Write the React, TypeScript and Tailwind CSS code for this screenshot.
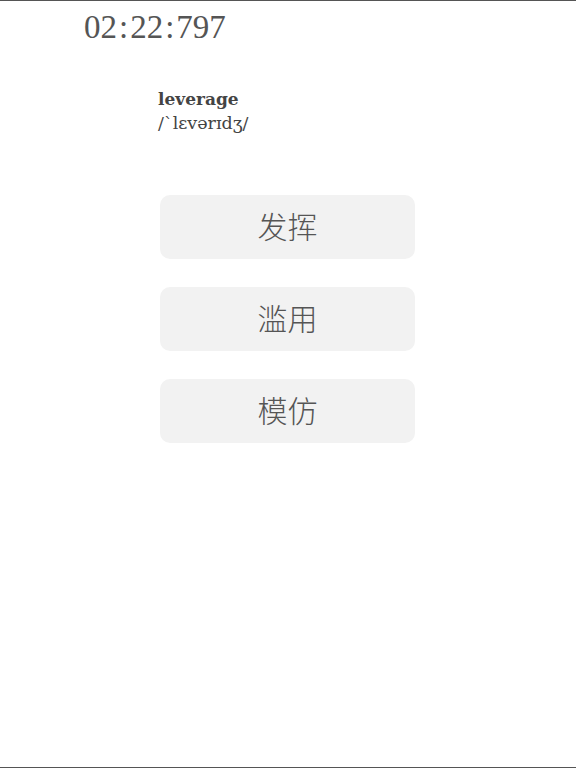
import React from 'react';

const options = ['发挥', '滥用', '模仿'];

const App: React.FC = () => {
  return (
    <div className="h-[768px] w-[576px] border-y border-[#555] bg-white text-[#555] flex flex-col">
      {/* Timer */}
      <div className="pl-[84px] pt-[6px] text-[33px] leading-[40px] font-['Liberation_Serif',serif] text-[#555] flex">
        <span>02</span>
        <span className="mx-[2px]">:</span>
        <span>22</span>
        <span className="mx-[2px]">:</span>
        <span>797</span>
      </div>

      {/* Word */}
      <div className="pl-[158px] pt-[40px] font-['DejaVu_Serif',serif]">
        <div className="text-[17px] leading-[24px] font-semibold text-[#444]">leverage</div>
        <div className="text-[17.5px] leading-[24px] text-[#444]">/ˋlɛvərɪdʒ/</div>
      </div>

      {/* Options */}
      <div className="mt-[60px] flex flex-col gap-[28px] pl-[160px]">
        {options.map((o) => (
          <button
            key={o}
            className="w-[255px] h-[64px] rounded-[10px] bg-[#f2f2f2] flex items-center justify-center pb-[3px] text-[30px] font-light text-[#555] font-['Noto_Sans_CJK_SC',sans-serif]"
          >
            {o}
          </button>
        ))}
      </div>
    </div>
  );
};

export default App;
